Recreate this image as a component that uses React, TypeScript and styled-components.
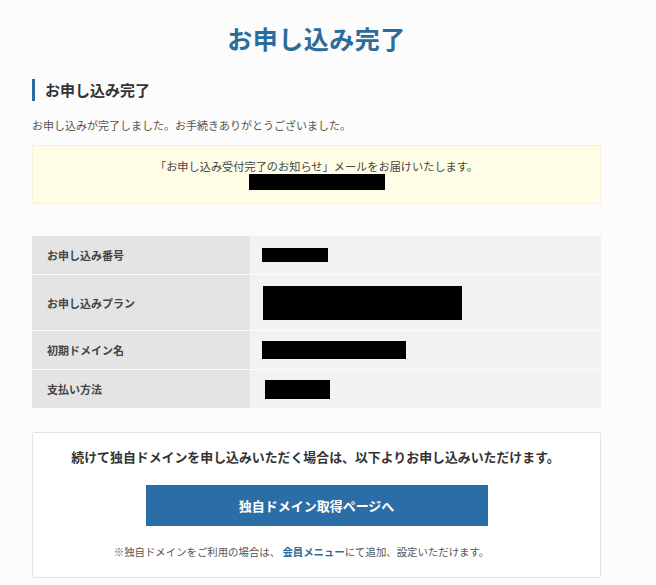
import React from 'react'
import styled, { createGlobalStyle } from 'styled-components'

const GlobalStyle = createGlobalStyle`
  html, body {
    margin: 0;
    padding: 0;
    background: #fcfcfc;
    font-family: "Noto Sans CJK JP", "Noto Sans", sans-serif;
    color: #333;
  }
`

interface Row {
  label: string
  maskWidth: number
  maskHeight: number
  maskOffset?: number
  height: number
}

const rows: Row[] = [
  { label: 'お申し込み番号', maskWidth: 66, maskHeight: 14, height: 38 },
  { label: 'お申し込みプラン', maskWidth: 199, maskHeight: 34, maskOffset: 1, height: 55 },
  { label: '初期ドメイン名', maskWidth: 144, maskHeight: 18, height: 38 },
  { label: '支払い方法', maskWidth: 65, maskHeight: 19, maskOffset: 3, height: 38 },
]

const App: React.FC = () => (
  <>
    <GlobalStyle />
    <Page>
      <Title>お申し込み完了</Title>
      <SectionHeading>お申し込み完了</SectionHeading>
      <Lead>お申し込みが完了しました。お手続きありがとうございました。</Lead>
      <Notice>
        <NoticeText>「お申し込み受付完了のお知らせ」メールをお届けいたします。</NoticeText>
        <Mask $w={136} $h={16} />
      </Notice>
      <Table>
        {rows.map((row) => (
          <TableRow key={row.label} $h={row.height}>
            <Label>{row.label}</Label>
            <Value $offset={row.maskOffset || 0}>
              <Mask $w={row.maskWidth} $h={row.maskHeight} />
            </Value>
          </TableRow>
        ))}
      </Table>
      <Card>
        <CardLead>続けて独自ドメインを申し込みいただく場合は、以下よりお申し込みいただけます。</CardLead>
        <PrimaryButton type="button">独自ドメイン取得ページへ</PrimaryButton>
        <Note>
          ※独自ドメインをご利用の場合は、 <NoteLink href="#">会員メニュー</NoteLink>にて追加、設定いただけます。
        </Note>
      </Card>
    </Page>
  </>
)

const Page = styled.div`
  width: 569px;
  margin-left: 32px;
  padding-top: 22px;
  padding-bottom: 6px;
`

const Title = styled.h1`
  margin: 0;
  text-align: center;
  font-size: 25px;
  line-height: 32px;
  font-weight: 700;
  color: #2b6c9c;
  letter-spacing: 0.5px;
`

const SectionHeading = styled.h2`
  margin: 25px 0 0;
  padding-left: 10px;
  border-left: 3px solid #2b6c9c;
  font-size: 15px;
  line-height: 22px;
  font-weight: 700;
  color: #333;
`

const Lead = styled.p`
  margin: 16px 0 0;
  font-size: 11px;
  line-height: 16px;
  color: #555;
`

const Notice = styled.div`
  margin-top: 12px;
  height: 59px;
  box-sizing: border-box;
  padding-top: 12px;
  background: #fffde6;
  border: 1px solid #f6f3dc;
  display: flex;
  flex-direction: column;
  align-items: center;
`

const NoticeText = styled.p`
  margin: 0;
  font-size: 11.2px;
  line-height: 16px;
  color: #444;
`

const Mask = styled.span<{ $w: number; $h: number }>`
  display: block;
  width: ${(p) => p.$w}px;
  height: ${(p) => p.$h}px;
  background: #000;
`

const Table = styled.div`
  margin-top: 32px;
  display: flex;
  flex-direction: column;
  gap: 1px;
  background: #fcfcfc;
`

const TableRow = styled.div<{ $h: number }>`
  display: grid;
  grid-template-columns: 218px 1fr;
  height: ${(p) => p.$h}px;
`

const Label = styled.div`
  display: flex;
  align-items: center;
  padding-left: 15px;
  background: #e4e4e4;
  font-size: 11px;
  font-weight: 700;
  color: #444;
`

const Value = styled.div<{ $offset: number }>`
  display: flex;
  align-items: center;
  padding-left: ${(p) => 12 + p.$offset}px;
  background: #f2f2f2;
`

const Card = styled.div`
  margin-top: 24px;
  height: 146px;
  box-sizing: border-box;
  padding-top: 15px;
  background: #fff;
  border: 1px solid #e3e3e3;
  border-radius: 2px;
  display: flex;
  flex-direction: column;
  align-items: center;
`

const CardLead = styled.p`
  margin: 0 0 0 -2px;
  font-size: 12.9px;
  line-height: 18px;
  font-weight: 700;
  color: #333;
`

const PrimaryButton = styled.button`
  margin-top: 19px;
  width: 342px;
  height: 41px;
  border: none;
  background: #2b6ea5;
  color: #fff;
  font-family: inherit;
  font-size: 13px;
  font-weight: 700;
  cursor: pointer;
`

const Note = styled.p`
  margin: 19px 30px 0 0;
  font-size: 10.4px;
  line-height: 14px;
  color: #555;
`

const NoteLink = styled.a`
  color: #2b6c9c;
  font-weight: 700;
  text-decoration: none;
`

export default App
